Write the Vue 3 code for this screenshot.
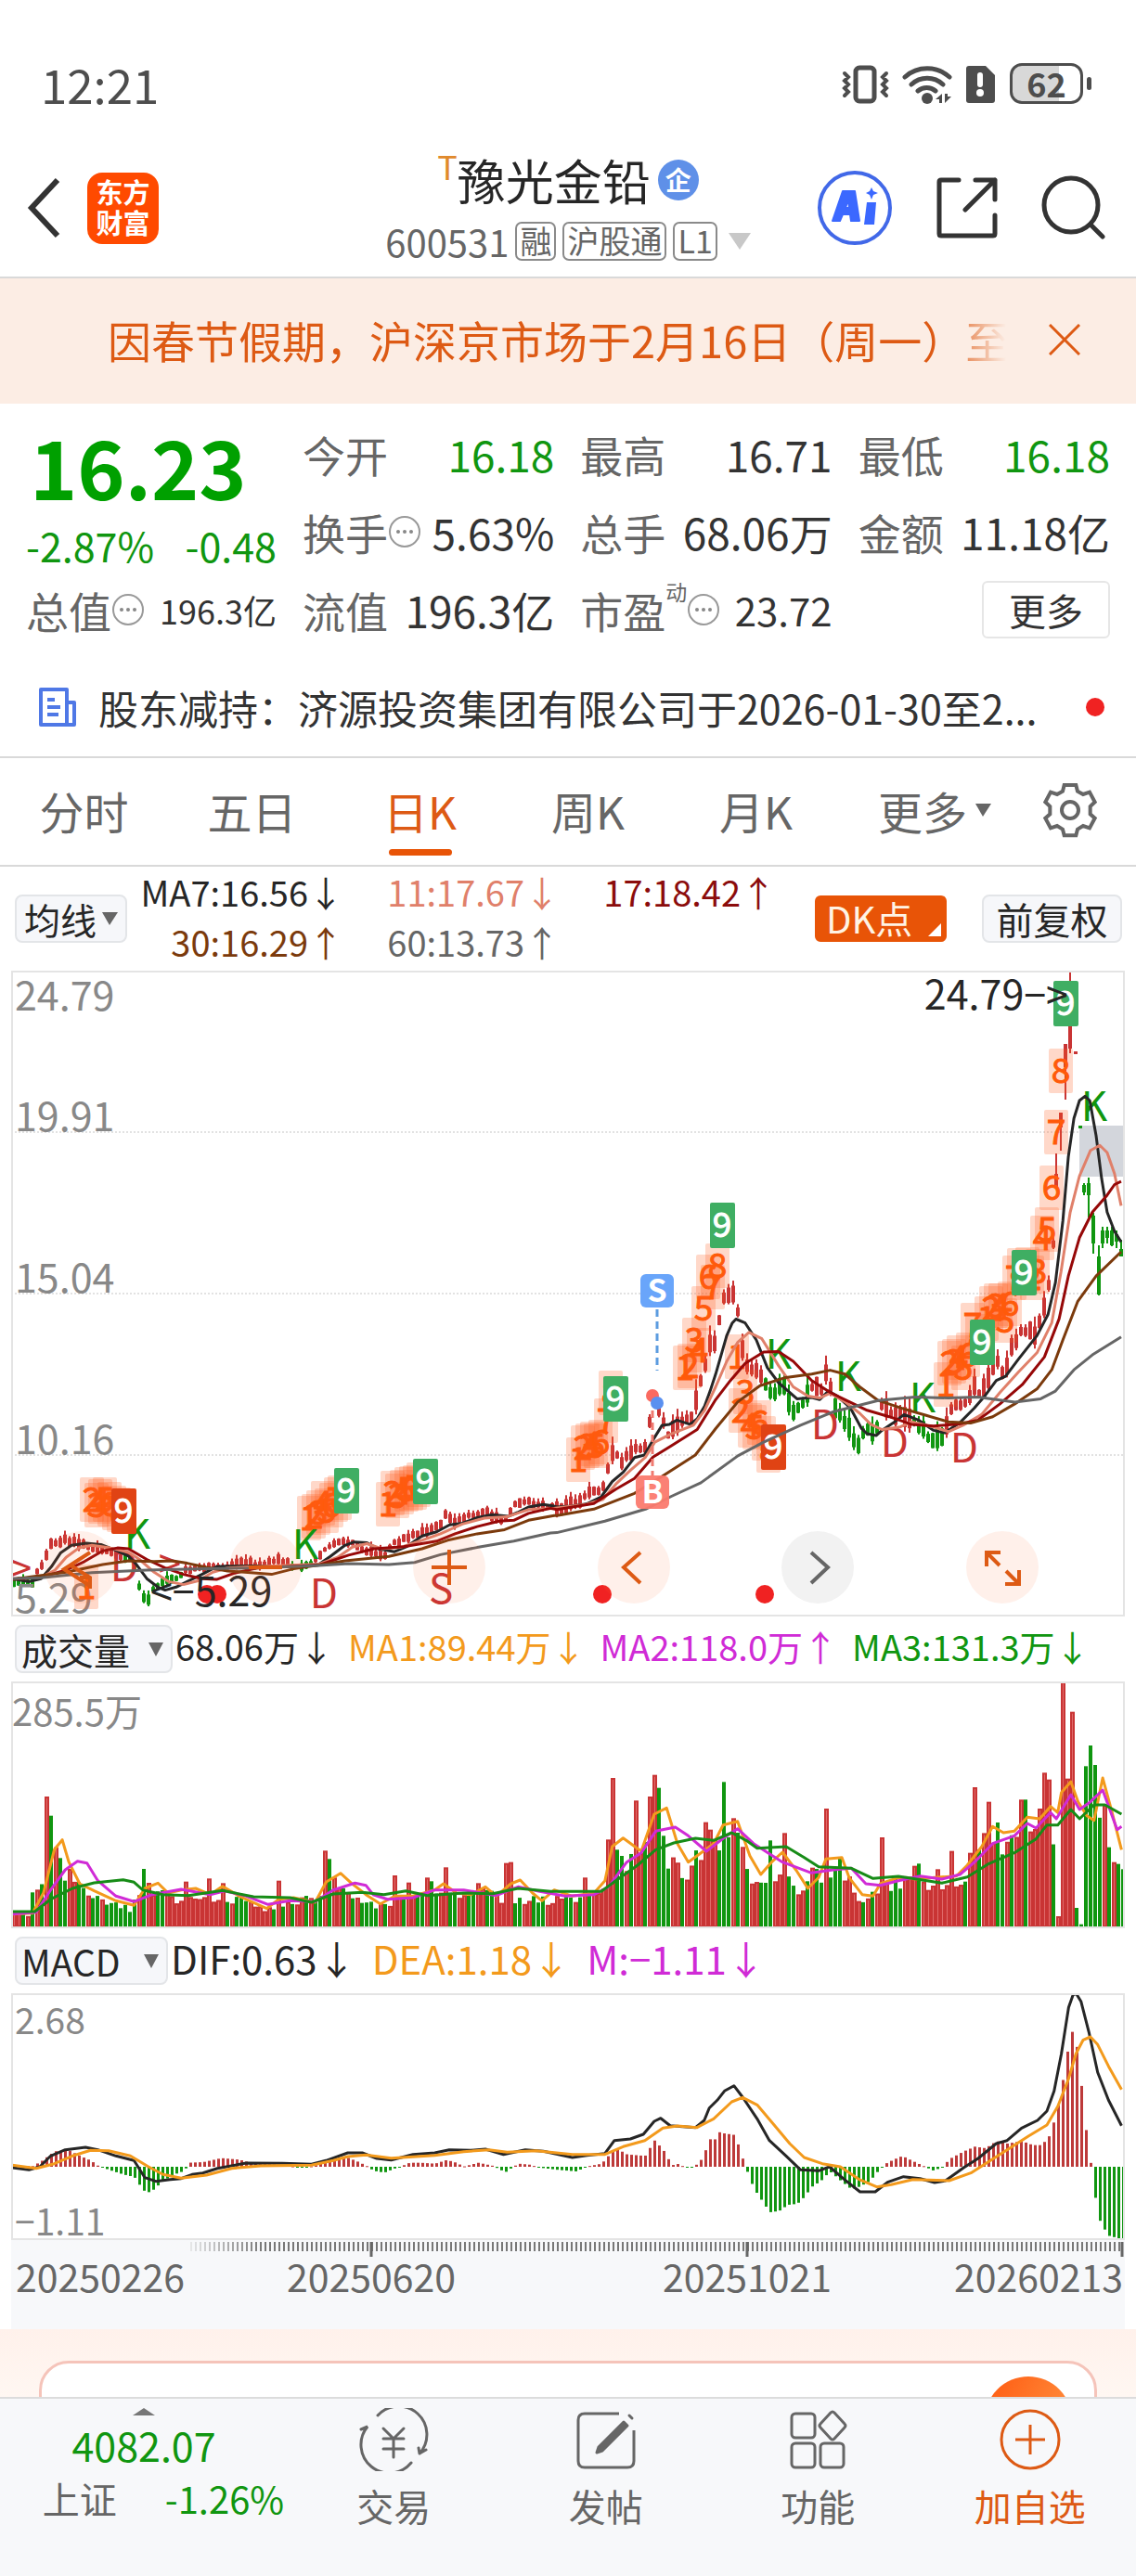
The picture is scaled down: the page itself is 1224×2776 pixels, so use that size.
<script setup>
import { ref } from 'vue'

const tab = ref('日K')
const tabs = ['分时', '五日', '日K', '周K', '月K']

const averages = [
  { text: 'MA7:16.56↓', color: '#262626' },
  { text: '11:17.67↓', color: '#e0806a' },
  { text: '17:18.42↑', color: '#8b0c0c' },
  { text: '30:16.29↑', color: '#7b3a0c' },
  { text: '60:13.73↑', color: '#666' },
]

const STEP = 5
const COUNT = 240
const FIRST = 15

// Pairs "x y x y ..." to points, run through a panel's own scale.
const parse = (text, mx, my) => {
  const n = text.trim().split(/\s+/).map(Number)
  const out = []
  for (let i = 0; i < n.length; i += 2) out.push([mx(n[i]), my(n[i + 1])])
  return out
}
const path = (pts) => 'M' + pts.map((p) => p[0].toFixed(1) + ' ' + p[1].toFixed(1)).join('L')
const at = (pts, x) => {
  let i = 1
  while (i < pts.length - 1 && pts[i][0] < x) i++
  const [a, b] = [pts[i - 1], pts[i]]
  const t = Math.min(1, Math.max(0, (x - a[0]) / (b[0] - a[0])))
  return a[1] + (b[1] - a[1]) * t
}
const noise = (i) => {
  const v = Math.sin(i * 127.1 + 11.7) * 43758.5453
  return v - Math.floor(v)
}
const UP = '#c93434'
const DOWN = '#109610'

// ---- price panel ----
const priceY = (y) => 1040 + y / 2.178
const early = (t) => parse(t, (x) => x / 2.529, priceY)
const late = (t) => parse(t, (x) => 600 + x / 2.513, priceY)
const series = (a, b) => [...early(a), ...late(b)]

const priceLines = [
  {
    color: '#262626',
    d: path(series(
      '32 1440 80 1447 112 1440 140 1412 165 1380 195 1362 235 1357 275 1360 320 1375 350 1387 370 1405 400 1440 430 1460 450 1467 480 1460 510 1447 550 1430 590 1412 620 1411 660 1410 700 1410 760 1412 820 1410 870 1406 900 1388 940 1362 965 1354 1000 1356 1030 1370 1075 1377 1110 1364 1150 1340 1190 1330 1225 1314 1260 1310 1300 1297 1340 1290 1385 1294 1410 1285 1440 1272 1480 1266 1510 1270',
      '0 1272 40 1270 80 1265 120 1248 150 1212 180 1190 210 1156 237 1150 260 1115 285 1080 305 1078 325 1068 360 1078 380 1065 400 1035 415 1000 430 960 460 870 475 840 485 831 510 840 540 880 570 945 600 980 650 1018 690 1015 712 1020 735 1000 760 1012 795 1040 825 1088 840 1100 865 1104 880 1092 910 1075 940 1055 980 1068 1020 1092 1050 1098 1090 1075 1130 1040 1160 1010 1190 975 1215 965 1250 925 1300 870 1330 820 1350 745 1370 600 1385 450 1400 360 1415 318 1430 308 1443 318 1460 400 1475 500 1490 580 1510 625 1528 650')),
  },
  {
    color: '#e0806a',
    d: path(series(
      '32 1440 112 1437 150 1420 180 1390 215 1368 250 1362 300 1368 350 1378 380 1395 420 1425 460 1447 500 1454 540 1445 580 1425 620 1415 700 1412 870 1406 920 1390 960 1366 1000 1358 1040 1370 1090 1367 1150 1350 1200 1335 1260 1312 1320 1298 1380 1295 1440 1278 1510 1275',
      '0 1274 80 1266 125 1254 160 1218 200 1185 240 1155 265 1120 310 1100 370 1080 400 1045 430 990 460 930 490 885 520 862 555 877 600 940 640 990 680 1012 712 1016 740 1005 780 1025 820 1052 850 1078 880 1090 930 1084 960 1072 1020 1084 1060 1095 1100 1080 1150 1055 1200 1003 1250 955 1300 910 1340 840 1365 720 1390 580 1415 495 1445 435 1470 423 1490 440 1510 490 1528 565')),
  },
  {
    color: '#960808',
    d: path(series(
      '32 1442 112 1437 180 1420 230 1400 280 1375 320 1368 350 1370 400 1395 450 1415 500 1430 550 1440 590 1442 640 1427 700 1415 870 1408 950 1385 1020 1370 1100 1365 1190 1352 1240 1335 1300 1318 1360 1305 1400 1303 1440 1287 1500 1275',
      '0 1278 100 1264 160 1230 210 1205 260 1155 310 1128 380 1090 430 1020 470 975 510 935 560 908 600 907 640 930 690 975 740 1003 780 1020 840 1045 900 1060 960 1078 1020 1082 1090 1077 1140 1068 1200 1030 1260 985 1320 920 1360 830 1385 730 1415 640 1450 580 1490 540 1510 515 1528 508')),
  },
  {
    color: '#7b3a0c',
    d: path(series(
      '32 1442 180 1425 280 1407 350 1398 420 1400 470 1398 510 1404 560 1413 620 1422 740 1430 800 1417 870 1408 940 1398 1060 1388 1150 1370 1220 1350 1300 1335 1375 1325 1440 1303 1510 1292',
      '0 1292 100 1277 210 1240 280 1203 375 1150 430 1088 490 1025 550 987 620 968 690 960 740 951 780 960 820 990 870 1022 940 1042 1000 1057 1060 1072 1120 1075 1180 1060 1240 1030 1300 995 1340 950 1370 880 1410 790 1460 730 1528 673')),
  },
  {
    color: '#666',
    d: path(series(
      '32 1440 112 1438 250 1426 400 1420 560 1417 700 1415 870 1409 950 1405 1060 1407 1130 1402 1200 1384 1300 1367 1400 1352 1500 1333',
      '0 1332 130 1305 240 1277 310 1247 390 1215 490 1152 560 1120 660 1080 750 1048 870 1022 970 1014 1060 1016 1140 1014 1240 1026 1310 1018 1350 1000 1400 950 1450 915 1528 873')),
  },
]

const mid = series(
  '32 1446 85 1450 100 1428 120 1398 135 1362 160 1350 185 1350 210 1355 240 1365 300 1378 330 1390 345 1385 365 1405 375 1450 390 1480 400 1500 412 1470 440 1447 490 1440 500 1422 560 1415 620 1410 660 1402 700 1408 755 1398 790 1408 830 1412 860 1395 885 1370 940 1350 970 1360 1000 1378 1050 1383 1070 1358 1130 1338 1170 1323 1200 1315 1213 1285 1240 1305 1290 1290 1320 1280 1350 1300 1380 1302 1400 1268 1430 1258 1470 1268 1510 1270',
  '0 1275 60 1260 80 1243 120 1235 135 1195 150 1135 175 1170 210 1135 235 1140 250 1085 260 1000 275 1040 300 1105 330 1075 365 1060 380 1010 400 950 415 880 430 900 445 790 475 760 488 800 500 890 520 950 545 955 560 980 575 1010 590 1005 615 980 630 1040 650 1045 670 1025 690 990 715 1000 725 960 737 975 750 1020 765 1060 790 1080 800 1115 815 1125 830 1095 865 1092 875 1030 900 1050 940 1050 965 1070 1000 1100 1015 1115 1050 1100 1065 1050 1090 1030 1115 1020 1128 970 1140 1010 1165 970 1190 930 1215 965 1230 905 1255 855 1290 870 1305 850 1320 790 1328 780 1340 680 1347 640')
const falling = [[12, 36], [133, 196], [314, 338], [822, 872], [898, 945], [981, 1019]]
const candles = []
for (let i = 0; FIRST + i * STEP < 1136; i++) {
  const x = FIRST + i * STEP
  const y = at(mid, x)
  const size = x < 600 ? 4 + noise(i) * 7 : x < 700 ? 6 + noise(i) * 11 : 7 + noise(i) * 15
  const color = falling.some(([a, b]) => x >= a && x <= b) ? DOWN : UP
  const wick = size * noise(i + 700) * 0.6
  const shift = (noise(i + 300) - 0.5) * size * 0.5
  candles.push({ x, top: y - size / 2 + shift, h: size, wt: y - size / 2 - wick + shift, wb: y + size / 2 + wick * 0.4 + shift, color })
}
const lastBars = [
  [1138, 1243, 1280, 1265, 1280, UP], [1143, 1199, 1240, 1199, 1215, UP], [1148, 1125, 1185, 1125, 1150, UP],
  [1153, 1046, 1135, 1090, 1130, UP], [1159, 1133, 1136, 1133, 1136, UP], [1164, 1213, 1216, 1213, 1216, DOWN],
  [1168, 1275, 1288, 1277, 1285, DOWN], [1173, 1269, 1312, 1275, 1288, DOWN], [1178, 1307, 1351, 1310, 1340, DOWN],
  [1184, 1342, 1396, 1354, 1395, DOWN], [1188, 1322, 1345, 1326, 1340, DOWN], [1193, 1322, 1340, 1326, 1334, DOWN],
  [1198, 1322, 1343, 1326, 1342, DOWN], [1203, 1326, 1345, 1330, 1338, DOWN], [1208, 1336, 1354, 1346, 1354, DOWN],
]
for (const [x, wt, wb, top, bottom, color] of lastBars) candles.push({ x, wt, wb, top, h: bottom - top, color })

const run = (t) => {
  const n = t.split(' ').map(Number)
  const out = []
  for (let i = 0; i < n.length; i += 3) out.push({ n: n[i], x: n[i + 1], y: n[i + 2] })
  return out
}
const counts = run('1 93 1710 2 99 1616 3 104 1622 4 108 1618 5 113 1616 6 118 1621 7 123 1625 8 128 1627 1 333 1636 2 338 1634 3 343 1630 4 348 1620 5 352 1628 6 357 1622 7 362 1616 8 366 1614 1 418 1621 2 423 1609 3 428 1612 4 433 1608 5 438 1605 6 443 1604 7 447 1603 8 451 1600 1 623 1573 2 628 1560 3 633 1558 4 638 1556 5 642 1558 6 647 1554 7 653 1531 8 658 1501 1 738 1474 2 743 1472 3 748 1444 4 753 1455 5 758 1410 6 763 1376 7 768 1387 8 773 1364 1 794 1462 2 798 1520 3 803 1500 4 808 1536 5 813 1538 6 818 1533 7 823 1550 8 828 1563 1 1019 1492 2 1023 1469 3 1028 1467 4 1033 1463 5 1038 1474 6 1043 1460 7 1048 1428 8 1053 1440 1 1063 1421 2 1068 1410 3 1073 1407 4 1078 1407 5 1083 1423 6 1088 1405 7 1093 1377 8 1098 1369 1 1107 1368 2 1112 1377 3 1118 1370 4 1123 1334 5 1128 1325 6 1133 1280 7 1138 1220 8 1143 1154')
const nines = [
  [133, 1628, 0], [373, 1606, 1], [458, 1596, 1], [663, 1507, 1], [778, 1320, 1],
  [833, 1559, 0], [1058, 1446, 1], [1103, 1371, 1], [1148, 1081, 1],
]
const marks = [
  ['K', 148, 1653], ['K', 329, 1664], ['K', 839, 1459], ['K', 914, 1483], ['K', 994, 1506], ['K', 1179, 1192],
  ['D', 134, 1688], ['D', 349, 1717], ['D', 889, 1535], ['D', 964, 1554], ['D', 1039, 1560],
  ['S', 475, 1712], ['>', 22, 1690], ['>', 183, 1685],
]
const scale = [['24.79', 1089], ['19.91', 1219], ['15.04', 1393], ['10.16', 1567], ['5.29', 1738]]

// ---- volume panel ----
const wide = (x) => x / 1.281
const volume = (t) => parse(t, wide, (y) => 1740 + y / 3)
const volumeBase = volume('17 968 40 968 48 880 58 870 88 860 120 900 180 955 192 900 220 885 240 925 270 910 330 925 365 950 400 935 430 900 440 920 470 875 490 915 520 945 560 910 640 910 660 870 690 930 740 925 800 920 830 880 860 830 885 770 895 700 925 790 945 840 980 740 1017 730 1040 870 1080 850 1105 900 1130 840 1170 860 1185 930 1230 870 1280 870 1300 900 1330 850 1345 760 1370 720 1385 770 1410 700 1425 740 1440 680 1465 700 1484 700 1510 630 1530 760 1548 830')
const risePeaks = volume('62 588 77 752 95 822 204 867 254 863 287 853 305 868 382 860 446 763 460 850 543 843 561 866 587 850 613 817 658 868 697 803 704 800 806 850 837 727 844 528 876 601 882 770 895 588 902 518 971 671 978 695 1010 658 1080 706 1106 892 1119 818 1138 627 1216 720 1260 812 1292 823 1312 764 1338 770 1344 558 1362 605 1408 598 1432 627 1440 511 1447 533 1459 975 1465 217 1472 530 1478 314 1523 615 1536 800')
const fallPeaks = volume('69 650 83 787 88 860 197 822 453 790 594 862 850 760 857 780 908 560 915 715 997 541 1017 705 1061 730 1158 785 1267 805 1350 760 1375 672 1414 598 1484 948 1491 1001 1497 490 1504 423 1510 486 1529 752 1542 806 1548 823')
const volumeBars = Array.from({ length: COUNT }, (_, i) => {
  const x = FIRST + i * STEP
  const near = (pts) => pts.find((p) => Math.abs(p[0] - x) <= 2.5)
  const rise = near(risePeaks)
  const fall = near(fallPeaks)
  const peak = rise || fall
  const base = at(volumeBase, x)
  const top = peak ? peak[1] : 2077 - (2077 - base) * (0.82 + noise(i) * 0.36)
  const isUp = rise ? true : fall ? false : noise(i + 50) > (x > 110 && x < 150 ? 0.9 : 0.42)
  return { x, top, color: isUp ? UP : DOWN, isUp }
})
const volumeLines = [
  { color: '#f39a1c', d: path(volume('17 968 45 965 60 900 75 760 86 728 95 800 110 870 130 893 160 925 185 940 200 885 218 868 232 900 250 890 270 885 290 905 307 878 330 910 368 950 385 920 405 915 435 930 450 865 470 836 485 868 505 905 525 935 545 910 570 910 600 890 612 870 630 900 650 905 670 880 685 910 705 870 718 858 735 900 748 925 765 890 790 910 820 900 835 860 845 750 860 722 885 765 903 645 920 625 935 740 950 800 965 775 985 740 998 680 1018 668 1035 780 1050 840 1065 800 1080 768 1100 830 1115 885 1130 850 1140 790 1162 785 1172 850 1190 905 1205 910 1215 870 1240 850 1265 855 1290 850 1320 845 1335 810 1355 750 1370 685 1385 705 1400 700 1418 655 1435 660 1450 620 1460 640 1465 575 1478 540 1488 605 1500 650 1510 665 1522 528 1535 640 1548 760')) },
  { color: '#d02bd6', d: path(volume('17 968 50 962 70 890 90 825 107 797 120 803 135 860 160 910 185 928 210 905 250 888 290 905 310 893 340 910 370 937 400 925 435 928 460 890 490 868 505 875 515 905 535 920 570 915 600 890 640 890 685 908 715 880 745 895 780 910 820 905 840 880 865 800 885 770 905 700 932 687 950 715 975 765 1000 720 1018 692 1040 740 1080 800 1120 835 1150 825 1175 820 1195 870 1215 875 1240 860 1270 845 1300 855 1325 840 1345 800 1370 740 1400 715 1418 675 1430 690 1450 640 1458 660 1478 582 1490 630 1505 605 1522 567 1542 695 1548 685')) },
  { color: '#178c17', d: path(volume('17 960 48 960 70 920 100 885 130 867 170 857 185 865 197 890 225 905 260 908 307 892 350 912 400 915 430 930 460 903 500 898 530 905 560 893 590 908 640 900 680 902 715 885 760 895 830 895 850 860 880 810 905 760 930 738 960 723 985 730 1010 705 1030 730 1045 755 1085 750 1110 785 1130 815 1175 820 1205 853 1240 846 1300 868 1335 848 1365 805 1400 770 1430 725 1445 680 1460 680 1478 630 1490 660 1510 615 1525 615 1548 645')) },
]

// ---- MACD panel ----
const macd = (t) => parse(t, wide, (y) => 2080 + y / 3)
const hist = macd('17 763 45 763 58 745 75 715 95 712 110 730 125 745 135 762 140 766 150 775 170 790 185 798 197 840 203 849 210 842 225 810 245 785 255 778 259 752 280 750 305 737 330 742 350 755 380 757 405 764 412 768 425 766 440 757 460 737 478 734 495 750 507 764 515 778 530 784 545 770 553 764 565 752 580 752 600 755 615 744 625 748 640 764 660 752 680 762 688 772 697 783 705 770 715 755 730 758 745 768 770 775 795 780 810 764 830 755 845 715 852 708 865 725 890 730 903 680 915 710 927 760 935 756 945 766 955 767 965 752 972 722 979 675 985 682 992 653 1004 660 1011 657 1018 690 1025 740 1031 780 1040 835 1050 870 1062 912 1075 908 1087 888 1100 885 1110 862 1120 830 1133 810 1145 780 1160 810 1175 838 1185 830 1200 812 1213 775 1222 755 1232 743 1245 730 1258 745 1272 760 1287 777 1300 768 1310 740 1330 715 1345 700 1360 705 1375 682 1390 690 1410 682 1425 695 1437 695 1447 670 1453 630 1460 570 1466 495 1472 410 1478 320 1485 360 1491 470 1497 618 1504 730 1510 845 1517 935 1523 963 1530 988 1548 999')
const macdBars = Array.from({ length: COUNT }, (_, i) => {
  const x = FIRST + i * STEP
  const y = at(hist, x)
  return { x, y: Math.min(y, 2335), h: Math.max(1, Math.abs(y - 2335)), color: y < 2335 ? '#bd3a3a' : DOWN }
})
const macdLines = [
  { color: '#262626', d: path(macd('17 768 40 775 55 765 70 730 90 710 118 702 135 710 160 730 185 745 200 800 215 812 235 806 250 803 265 790 280 785 300 770 340 753 390 754 430 757 450 745 480 720 500 720 520 738 540 743 570 725 600 720 620 710 650 712 670 708 695 725 725 710 750 715 790 735 810 728 835 722 848 680 870 675 888 660 903 618 912 608 925 632 960 638 972 615 979 575 990 550 1000 520 1013 503 1025 540 1045 610 1062 680 1085 730 1105 775 1130 778 1145 765 1165 805 1187 846 1208 846 1225 815 1247 797 1270 803 1290 816 1305 810 1330 768 1350 738 1375 690 1390 680 1410 640 1432 615 1445 585 1455 520 1465 400 1475 250 1481 210 1485 204 1492 230 1503 330 1515 460 1530 550 1548 632')) },
  { color: '#f39a1c', d: path(macd('17 760 50 770 75 755 100 730 125 712 150 713 180 730 205 765 225 790 250 802 285 792 320 770 360 762 430 760 460 745 480 732 505 727 540 737 600 728 640 716 675 710 700 718 740 713 790 725 835 725 860 700 890 680 915 640 935 633 962 638 985 610 1010 555 1025 541 1045 565 1065 620 1090 690 1110 735 1135 755 1160 765 1185 805 1210 830 1230 823 1260 806 1310 810 1340 785 1370 740 1400 695 1420 665 1445 630 1460 570 1475 480 1485 400 1495 355 1505 345 1515 370 1530 440 1548 515')) },
]
const ticks = Array.from({ length: 201 }, (_, i) => ({ x: 205 + i * STEP, o: Math.min(1, 0.15 + i / 18) }))

const quotes = [
  { label: '今开', value: '16.18', tone: 'down' },
  { label: '最高', value: '16.71' },
  { label: '最低', value: '16.18', tone: 'down' },
  { label: '换手', value: '5.63%', info: true },
  { label: '总手', value: '68.06万' },
  { label: '金额', value: '11.18亿' },
  { label: '总值', value: '196.3亿', info: true, tone: 'small' },
  { label: '流值', value: '196.3亿' },
  { label: '市盈', note: '动', value: '23.72', info: true, tone: 'medium' },
]
</script>

<template>
  <main class="app">
    <div class="status">
      <time>12:21</time>
      <div class="status-icons">
        <svg width="174" height="48" viewBox="900 66 174 48" fill="none" stroke="#4d4d4d" stroke-linecap="round">
          <rect x="921" y="73" width="20" height="36" rx="4" stroke-width="5" />
          <path d="M909 79l4 4-4 4 4 4-4 4 4 4-4 4M954 79l-4 4 4 4-4 4 4 4-4 4 4 4" stroke-width="4" />
          <path d="M974 83a36 36 0 0 1 48 0M981 91a25 25 0 0 1 34 0M988 98a15 15 0 0 1 19 0" stroke-width="5" />
          <g fill="#4d4d4d" stroke="none">
            <circle cx="998" cy="106" r="6" />
            <path d="M1007 107l7-6v10h-3v-4zM1017 101v10l7-7h-4v-3z" />
            <path d="M1043 71h18l10 10v27q0 3-3 3h-25q-3 0-3-3V74q0-3 3-3z" />
          </g>
          <path d="M1055 81v10" stroke="#fff" stroke-width="6" />
          <circle cx="1055" cy="100" r="4" fill="#fff" stroke="none" />
        </svg>
        <div class="battery"><span>62</span></div>
        <i class="battery-cap"></i>
      </div>
    </div>

    <header class="top">
      <div class="side">
        <button class="plain" aria-label="返回">
          <svg width="44" height="68" viewBox="0 0 44 68" fill="none" stroke="#333" stroke-width="6"><path d="M36 4L8 34l28 30" /></svg>
        </button>
        <a class="logo" href="#">东方<br />财富</a>
      </div>
      <div class="stock">
        <h1><sup>T</sup>豫光金铅<b class="verified">企</b></h1>
        <div class="code">
          <span>600531</span><i>融</i><i>沪股通</i><i>L1</i>
          <svg width="24" height="18" viewBox="0 0 24 18"><path d="M0 0h24L12 18z" fill="#c8c8c8" /></svg>
        </div>
      </div>
      <div class="side tools">
        <button class="plain" aria-label="AI">
          <svg width="82" height="82" viewBox="0 0 82 82">
            <circle cx="41" cy="41" r="38" fill="none" stroke="#4168e8" stroke-width="4" />
            <path fill="#3b68ff" stroke="#3b68ff" stroke-width="2" stroke-linejoin="round" fill-rule="evenodd" d="M17 55L28 23h13l5 32h-9l-1-7h-8l-3 7zM31 41h4l-1-9z" />
            <path fill="#3b68ff" d="M54 35h10l-2 24H51zM59 19l2 4 5 2-5 2-2 5-2-5-4-2 4-2z" />
          </svg>
        </button>
        <button class="plain" aria-label="分享">
          <svg width="68" height="68" viewBox="0 0 68 68" fill="none" stroke="#333" stroke-width="5" stroke-linecap="round" stroke-linejoin="round"><path d="M25 4H6Q4 4 4 6v56q0 2 2 2h56q2 0 2-2V42M43 4h21v21M64 4L32 36" /></svg>
        </button>
        <button class="plain" aria-label="搜索">
          <svg width="70" height="70" viewBox="0 0 70 70" fill="none" stroke="#333" stroke-width="5" stroke-linecap="round"><circle cx="32" cy="32" r="29" /><path d="M53 53l13 13" /></svg>
        </button>
      </div>
    </header>

    <div class="notice">
      <p>因春节假期，沪深京市场于2月16日（周一）至</p>
      <button class="plain" aria-label="关闭">
        <svg width="34" height="34" viewBox="0 0 34 34" stroke="#dd5a14" stroke-width="3"><path d="M1 1l32 32M33 1L1 33" /></svg>
      </button>
    </div>

    <section class="quote">
      <div class="summary">
        <strong>16.23</strong>
        <div class="change"><span>-2.87%</span><span>-0.48</span></div>
      </div>
      <dl v-for="q in quotes" :key="q.label" class="cell">
        <dt>
          {{ q.label }}<sup v-if="q.note">{{ q.note }}</sup>
          <svg v-if="q.info" width="36" height="36" viewBox="0 0 36 36"><circle cx="18" cy="18" r="16" fill="none" stroke="#999" stroke-width="2" /><g fill="#888"><circle cx="11" cy="18" r="2" /><circle cx="18" cy="18" r="2" /><circle cx="25" cy="18" r="2" /></g></svg>
        </dt>
        <dd :class="q.tone">{{ q.value }}</dd>
      </dl>
      <div class="more"><button>更多</button></div>
    </section>

    <a class="news" href="#">
      <svg width="40" height="42" viewBox="0 0 40 42" fill="none" stroke="#4f78e6" stroke-width="4" stroke-linejoin="round"><path d="M30 40H2V2h28zM30 40h8V16h-8M9 13h8M9 21h14M9 29h12" /></svg>
      <span>股东减持：济源投资集团有限公司于2026-01-30至2...</span>
      <i></i>
    </a>

    <nav class="tabs">
      <button v-for="t in tabs" :key="t" :class="{ active: t === tab }" @click="tab = t">{{ t }}</button>
      <button class="tab-more">更多<svg width="17" height="14" viewBox="0 0 17 14"><path d="M0 0h17L8 14z" fill="#666" /></svg></button>
      <button class="gear" aria-label="设置">
        <svg width="60" height="60" viewBox="1035 75 180 180" fill="none" stroke="#666" stroke-width="12"><path d="M1106 84h38l5 20 18 10 21-7 17 32-15 14v25l15 13-17 32-21-7-18 11-5 20h-38l-5-20-18-11-21 7-17-32 15-13v-25l-15-14 17-32 21 7 18-10z" /><circle cx="1125" cy="165" r="27" /></svg>
      </button>
    </nav>

    <div class="averages">
      <div class="pick">
        <select aria-label="指标"><option>均线</option></select>
        <svg width="17" height="14" viewBox="0 0 17 14"><path d="M0 0h17L8 14z" fill="#666" /></svg>
      </div>
      <div class="values"><span v-for="a in averages" :key="a.text" :style="{ color: a.color }">{{ a.text }}</span></div>
      <button class="dk">DK点<svg width="14" height="14" viewBox="0 0 14 14"><path d="M14 0v14H0z" fill="#fff" /></svg></button>
      <button class="chip">前复权</button>
    </div>

    <div class="panel price">
      <svg viewBox="12 1046 1200 696">
        <g stroke="#e2e2e2" stroke-width="2" stroke-dasharray="2 2"><path d="M12 1220H1211M12 1394H1211M12 1568H1211" /></g>
        <rect x="1163" y="1213" width="48" height="55" fill="#d3d6dc" />
        <g v-for="(c, i) in candles" :key="'c' + i" :fill="c.color">
          <rect :x="c.x - 2" :y="c.top" width="4" :height="c.h" /><rect :x="c.x - 1" :y="c.wt" width="2" :height="c.wb - c.wt" />
        </g>
        <g fill="#888" font-size="43"><text v-for="s in scale" :key="s[0]" x="16" :y="s[1]">{{ s[0] }}</text></g>
        <g text-anchor="middle">
          <g v-for="(c, i) in counts" :key="'n' + i">
            <rect :x="c.x - 13" :y="c.y - 24" width="26" height="48" rx="2" fill="#ff5c1c" fill-opacity=".24" />
            <text :x="c.x" :y="c.y + 13" font-size="37" fill="#ff5a0a" stroke="#ff5a0a">{{ c.n }}</text>
          </g>
          <text v-for="(m, i) in marks" :key="'m' + i" :x="m[1]" :y="m[2] + 16" font-size="44" :fill="m[0] === 'K' ? '#109610' : UP">{{ m[0] }}</text>
          <g v-for="(n, i) in nines" :key="'g' + i">
            <rect :x="n[0] - 13" :y="n[1] - 24" width="27" height="49" rx="2" :fill="n[2] ? '#3fae63' : '#e04314'" />
            <text :x="n[0]" :y="n[1] + 13" font-size="37" fill="#fff" stroke="#fff">9</text>
          </g>
        </g>
        <g fill="none" stroke-width="3" stroke-linejoin="round"><path v-for="l in priceLines" :key="l.color" :stroke="l.color" :d="l.d" /></g>
        <g stroke-width="3" stroke-dasharray="8 5"><path d="M708 1411v66" stroke="#5c9ce0" /><path d="M703 1520v70" stroke="#f07a70" /></g>
        <circle cx="703" cy="1504" r="7" fill="#fa6a60" /><circle cx="708" cy="1512" r="7" fill="#5a90f0" />
        <rect x="690" y="1373" width="36" height="36" rx="6" fill="#69a5fa" /><rect x="685" y="1590" width="36" height="36" rx="6" fill="#fb7a6e" fill-opacity=".95" />
        <g fill="#fff" font-size="34" font-weight="700" text-anchor="middle"><text x="708" y="1403">S</text><text x="703" y="1620">B</text></g>
        <g fill="#f02222"><circle cx="223" cy="1718" r="10" /><circle cx="234" cy="1718" r="10" /><circle cx="649" cy="1718" r="10" /><circle cx="824" cy="1718" r="10" /></g>
        <g fill="#262626" font-size="43"><text x="162" y="1731">&lt;−5.29</text><text x="1151" y="1088" text-anchor="end">24.79−&gt;</text></g>
      </svg>
      <div class="zoombar">
        <button aria-label="最左"><svg viewBox="0 0 78 78"><path d="M49 23L21 41l28 18M27 36l22 14v12M38 50h11" /></svg></button>
        <button aria-label="缩小"><svg viewBox="0 0 78 78"><path d="M21 39h36" /></svg></button>
        <button aria-label="放大"><svg viewBox="0 0 78 78"><path d="M20 39h38M39 20v38" /></svg></button>
        <button aria-label="左移"><svg viewBox="0 0 78 78"><path d="M46 23L28 39l18 17" /></svg></button>
        <button class="grey" aria-label="右移"><svg viewBox="0 0 78 78"><path d="M32 23l18 16-18 17" /></svg></button>
        <button aria-label="全屏"><svg viewBox="0 0 78 78"><path d="M37 23H22v15M22 23l14 14M42 57h15V42M57 57L43 43" /></svg></button>
      </div>
    </div>

    <div class="indicator volume-row">
      <div class="pick"><select aria-label="成交量指标"><option>成交量</option></select><svg width="16" height="15" viewBox="0 0 16 15"><path d="M0 0h16L8 15z" fill="#666" /></svg></div>
      <span>68.06万↓</span><span class="orange">MA1:89.44万↓</span><span class="purple">MA2:118.0万↑</span><span class="green">MA3:131.3万↓</span>
    </div>
    <div class="panel">
      <svg viewBox="12 1812 1200 266">
        <text x="13" y="1860" font-size="40" fill="#888">285.5万</text>
        <g v-for="b in volumeBars" :key="b.x">
          <rect :x="b.x - 2" :y="b.top" :width="b.isUp ? 5 : 4" :height="2077 - b.top" :fill="b.color" />
          <rect v-if="b.isUp" :x="b.x" :y="b.top + 2" width="1" :height="Math.max(0, 2073 - b.top)" fill="#e06a6a" />
        </g>
        <g fill="none" stroke-width="3" stroke-linejoin="round"><path v-for="l in volumeLines" :key="l.color" :stroke="l.color" :d="l.d" /></g>
      </svg>
    </div>

    <div class="indicator macd-row">
      <div class="pick"><select aria-label="副图指标"><option>MACD</option></select><svg width="16" height="15" viewBox="0 0 16 15"><path d="M0 0h16L8 15z" fill="#666" /></svg></div>
      <span>DIF:0.63↓</span><span class="orange">DEA:1.18↓</span><span class="purple">M:−1.11↓</span>
    </div>
    <div class="panel">
      <svg viewBox="12 2148 1200 266">
        <g fill="#888" font-size="39"><text x="16" y="2192">2.68</text><text x="16" y="2409">−1.11</text></g>
        <rect v-for="b in macdBars" :key="b.x" :x="b.x - 1" :y="b.y" width="3" :height="b.h" :fill="b.color" />
        <g fill="none" stroke-width="3" stroke-linejoin="round"><path v-for="l in macdLines" :key="l.color" :stroke="l.color" :d="l.d" /></g>
      </svg>
    </div>

    <div class="axis">
      <svg viewBox="12 2414 1200 96">
        <rect v-for="t in ticks" :key="t.x" :x="t.x" y="2416" width="2" height="10" fill="#777" :opacity="t.o" />
        <path d="M400 2416v16M805 2416v16M1209 2416v16" stroke="#666" stroke-width="3" />
        <g fill="#666" font-size="41"><text x="17" y="2470">20250226</text><text x="400" y="2470" text-anchor="middle">20250620</text><text x="805" y="2470" text-anchor="middle">20251021</text><text x="1210" y="2470" text-anchor="end">20260213</text></g>
      </svg>
    </div>

    <section class="promo"><div class="card"><i></i></div></section>

    <footer>
      <a class="index" href="#">
        <svg width="24" height="8" viewBox="0 0 24 8"><path d="M12 0l12 8H0z" fill="#777" /></svg>
        <b>4082.07</b>
        <span>上证<em>-1.26%</em></span>
      </a>
      <a href="#">
        <svg width="76" height="68" viewBox="0 0 76 68" fill="none" stroke="#666" stroke-width="3" stroke-linecap="round"><path d="M21 8A30 30 0 0 1 66 49l7-4M66 49l-1-6M57 59A30 30 0 0 1 10 20l-7 3" /><path d="M27 22l11 11 11-11M27 33h22M27 44h22M38 33v20" /></svg>
        交易
      </a>
      <a href="#">
        <svg width="64" height="68" viewBox="0 0 64 68" fill="none" stroke="#666" stroke-width="3"><path d="M46 6H9q-7 0-7 7v44q0 7 7 7h46q7 0 7-7V24" /><path d="M51 15l4 4-27 27-6 2 2-6zM57 8l3 3" fill="#666" stroke-linejoin="round" stroke-linecap="round" /></svg>
        发帖
      </a>
      <a href="#">
        <svg width="64" height="68" viewBox="0 0 64 68" fill="none" stroke="#666" stroke-width="3"><rect x="4" y="6" width="25" height="26" rx="4" /><rect x="4" y="38" width="25" height="26" rx="4" /><rect x="35" y="38" width="25" height="26" rx="4" /><path d="M46 5q2-2 4 0l11 12q2 2 0 4L50 33q-2 2-4 0L35 21q-2-2 0-4z" /></svg>
        功能
      </a>
      <a class="add" href="#">
        <svg width="68" height="68" viewBox="0 0 68 68" fill="none" stroke="#dd5a14" stroke-width="3"><circle cx="34" cy="34" r="31" /><path d="M18 34h32M34 18v32" /></svg>
        加自选
      </a>
    </footer>
  </main>
</template>

<style>
body { background: #fff; }
</style>

<style scoped>
.app { font-family: "Noto Sans CJK SC", sans-serif; color: #333; overflow: hidden; }
* { box-sizing: border-box; }
button, select { font: inherit; color: inherit; border: 0; background: none; padding: 0; margin: 0; }
a { color: inherit; text-decoration: none; }
i, em { font-style: normal; }
svg { display: block; flex: none; }
p, h1, dl, dd { margin: 0; }

.status { display: flex; justify-content: space-between; align-items: center; padding: 58px 48px 0 44px; height: 122px; font-size: 51px; line-height: 60px; color: #4d4d4d; }
.status-icons { display: flex; align-items: center; }
.battery { width: 79px; height: 44px; margin-left: 13px; border: 3px solid #4d4d4d; border-radius: 13px; background: linear-gradient(90deg, #d8d8d8 69%, #fff 69%); font-size: 36px; font-weight: 700; line-height: 36px; text-align: center; }
.battery span { display: block; }
.battery-cap { width: 5px; height: 14px; margin-left: 4px; border-radius: 3px; background: #4d4d4d; }

.top { display: flex; justify-content: space-between; align-items: center; height: 178px; padding: 28px 32px 0 26px; border-bottom: 2px solid #d9d9d9; }
.side { display: flex; align-items: center; gap: 24px; flex: 1; }
.tools { justify-content: flex-end; gap: 46px; }
.logo { width: 77px; height: 77px; padding-top: 4px; border-radius: 16px; background: #ff4a00; color: #fff; font-size: 29px; line-height: 33px; font-weight: 700; text-align: center; }
.stock { display: flex; flex-direction: column; align-items: center; gap: 10px; padding-left: 6px; margin-bottom: 6px; }
h1 { display: flex; align-items: center; font-size: 52px; line-height: 68px; font-weight: 400; color: #262626; }
h1 sup { align-self: flex-start; font-size: 36px; line-height: 36px; color: #e08a2c; }
.verified { width: 44px; height: 44px; margin-left: 8px; border-radius: 50%; background: #5f90e8; color: #fff; font-size: 28px; line-height: 42px; text-align: center; }
.code { display: flex; align-items: center; font-size: 40px; line-height: 44px; color: #666; }
.code i { height: 42px; margin-left: 7px; padding: 0 3px; border: 2px solid #8a8a8a; border-radius: 7px; font-size: 34px; line-height: 36px; }
.code svg { margin-left: 12px; }

.notice { display: flex; align-items: center; justify-content: space-between; height: 135px; padding: 0 60px 4px 116px; background: #fcede4; color: #dd5a14; font-size: 47px; line-height: 64px; }
.notice p { width: 968px; white-space: nowrap; overflow: hidden; mask-image: linear-gradient(90deg, #000 93%, transparent); }

.quote { display: grid; grid-template-columns: 270px repeat(3, 1fr); column-gap: 28px; grid-auto-rows: 84px; padding: 12px 28px 0; font-size: 46px; line-height: 64px; }
.summary { grid-row: span 2; color: #00a000; }
.summary strong { display: block; padding: 8px 0 0 4px; font-size: 87px; line-height: 92px; }
.change { display: flex; justify-content: space-between; margin-top: 8px; font-size: 43px; color: #109610; white-space: nowrap; }
.cell { display: flex; justify-content: space-between; align-items: center; white-space: nowrap; }
.cell dt { display: flex; align-items: center; color: #666; }
.cell dt sup { align-self: flex-start; font-size: 23px; line-height: 24px; }
.down { color: #109610; }
.small { font-size: 36px; }
.medium { font-size: 42px; }
.more { display: flex; justify-content: flex-end; align-items: center; }
.more button { width: 138px; height: 62px; border: 2px solid #e6e6e6; border-radius: 6px; font-size: 40px; line-height: 54px; }

.news { display: flex; align-items: center; height: 118px; padding: 10px 34px 0 42px; border-bottom: 2px solid #d9d9d9; font-size: 43px; line-height: 60px; }
.news span { flex: 1; margin-left: 24px; white-space: nowrap; }
.news i { width: 20px; height: 20px; border-radius: 50%; background: #f02222; }

.tabs { display: grid; grid-template-columns: repeat(5, 181fr) 204fr 88fr; align-items: center; height: 117px; padding: 0 27px 4px 0; border-bottom: 2px solid #d9d9d9; font-size: 48px; line-height: 72px; color: #666; }
.tabs button { position: relative; }
.tabs .active { color: #dd5a14; }
.tabs .active::after { content: ""; position: absolute; left: calc(50% - 34px); width: 68px; bottom: -13px; height: 7px; border-radius: 4px; background: #e85407; }
.tab-more { display: flex; align-items: center; justify-content: center; gap: 9px; }
.gear { display: flex; justify-content: center; }

.averages { display: flex; align-items: center; height: 112px; padding: 0 15px 0 16px; }
.pick { position: relative; display: flex; align-items: center; height: 52px; border: 2px solid #e3e5e8; border-radius: 8px; background: #f6f7fa; }
.pick select { appearance: none; width: 100%; height: 48px; padding-left: 5px; font-size: 39px; line-height: 46px; color: #262626; }
.pick svg { position: absolute; right: 8px; pointer-events: none; }
.averages .pick { width: 121px; }
.averages .pick select { padding-left: 8px; }
.values { display: grid; grid-template-columns: 233px 233px 233px; padding-bottom: 4px; font-size: 38px; line-height: 54px; text-align: right; white-space: nowrap; }
.dk { position: relative; display: flex; align-items: center; width: 142px; height: 50px; margin-left: auto; padding: 0 0 2px 12px; border-radius: 6px; background: #e85407; color: #fff3e4; font-size: 40px; line-height: 46px; }
.dk svg { position: absolute; right: 6px; bottom: 6px; }
.chip { width: 151px; height: 52px; margin-left: 38px; border: 2px solid #e3e5e8; border-radius: 8px; background: #f6f7fa; color: #262626; font-size: 40px; line-height: 44px; }

.panel { position: relative; margin: 0 12px; outline: 2px solid #e4e4e4; outline-offset: -2px; }
.panel svg, .axis svg { width: 100%; }
.zoombar { position: absolute; left: 36px; right: 93px; bottom: 14px; display: flex; justify-content: space-between; }
.zoombar button { width: 78px; height: 78px; border-radius: 50%; background: rgba(255, 110, 50, .1); }
.zoombar svg { fill: none; stroke: #dd5a14; stroke-width: 4; }
.zoombar .grey { background: #f2f2f2; }
.zoombar .grey svg { stroke: #666; }

.indicator { display: flex; align-items: center; height: 70px; padding-left: 16px; color: #262626; white-space: nowrap; line-height: 58px; }
.indicator span { padding-bottom: 6px; }
.volume-row { gap: 15px; font-size: 38px; }
.volume-row .pick { width: 170px; margin-right: -12px; }
.macd-row { gap: 17px; font-size: 42px; }
.macd-row .pick { width: 165px; margin-right: -14px; }
.orange { color: #f39a1c; }
.purple { color: #d02bd6; }
.green { color: #109610; }

.axis { margin: 0 12px; background: #f7f8fa; }

.promo { height: 73px; padding: 34px 42px 0; background: linear-gradient(#fff1eb, #fff7f2); overflow: hidden; }
.card { position: relative; height: 80px; border: 3px solid #f5c4ba; border-radius: 32px 32px 0 0; background: #fff; }
.card i { position: absolute; right: 24px; top: 14px; width: 94px; height: 94px; border-radius: 50%; background: linear-gradient(120deg, #ff5a10, #ff9a48); }

footer { display: flex; border-top: 2px solid #dcdcdc; background: #f7f8fa; padding-bottom: 48px; color: #666; font-size: 40px; line-height: 58px; }
footer a { flex: 1; display: flex; flex-direction: column; align-items: center; gap: 8px; padding: 10px 0 0; }
footer .index { flex: none; width: 310px; gap: 0; }
.index b { margin-top: 2px; font-size: 43px; font-weight: 400; line-height: 58px; color: #109610; }
.index span { display: flex; gap: 52px; margin-left: 42px; white-space: nowrap; }
.index em { color: #109610; }
footer .add { color: #dd5a14; }
</style>
